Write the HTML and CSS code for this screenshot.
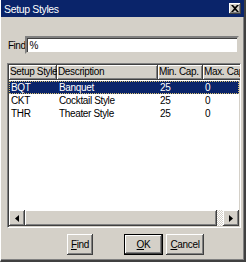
FILE: index.html
```html
<!DOCTYPE html>
<html>
<head>
<meta charset="utf-8">
<title>Setup Styles</title>
<link rel="stylesheet" href="styles.css">
</head>
<body>
<div class="window">
  <div class="titlebar">
    <span class="title">Setup Styles</span>
    <span class="close">
      <svg width="8" height="7" viewBox="0 0 8 7"><path d="M0 0h2l2 2 2-2h2L5 3.5 8 7H6L4 5 2 7H0l3-3.5z" fill="#000"/></svg>
    </span>
  </div>
  <div class="content">
    <div class="find-row">
      <span class="find-label">Find</span>
      <div class="input">%</div>
    </div>
    <div class="list">
      <div class="header">
        <div class="hcell c1">Setup Style</div>
        <div class="hcell c2">Description</div>
        <div class="hcell c3">Min. Cap.</div>
        <div class="hcell c4">Max. Cap.</div>
      </div>
      <div class="row selected">
        <div class="cell c1">BQT</div>
        <div class="cell c2">Banquet</div>
        <div class="cell c3">25</div>
        <div class="cell c4">0</div>
      </div>
      <div class="row">
        <div class="cell c1">CKT</div>
        <div class="cell c2">Cocktail Style</div>
        <div class="cell c3">25</div>
        <div class="cell c4">0</div>
      </div>
      <div class="row">
        <div class="cell c1">THR</div>
        <div class="cell c2">Theater Style</div>
        <div class="cell c3">25</div>
        <div class="cell c4">0</div>
      </div>
      <div class="spacer"></div>
      <div class="hscroll">
        <div class="sbtn"><svg width="4" height="7" viewBox="0 0 4 7"><path d="M4 0v7L0 3.5z" fill="#000"/></svg></div>
        <div class="thumb"></div>
        <div class="track"></div>
        <div class="sbtn"><svg width="4" height="7" viewBox="0 0 4 7"><path d="M0 0v7l4-3.5z" fill="#000"/></svg></div>
      </div>
    </div>
    <div class="buttons">
      <div class="btn find"><span class="u">F</span>ind</div>
      <div class="btn default"><span class="inner"><span class="u">O</span>K</span></div>
      <div class="btn"><span class="u">C</span>ancel</div>
    </div>
  </div>
</div>
</body>
</html>
```
FILE: styles.css
```css
* { box-sizing: border-box; }
html, body { margin: 0; padding: 0; background: #d4d0c8; }
body {
  font-family: "Liberation Sans", Arial, sans-serif;
  font-size: 10px;
  letter-spacing: -0.35px;
  color: #000;
}
.window {
  width: 246px;
  height: 262px;
  display: flex;
  flex-direction: column;
  background: #d4d0c8;
  border-left: 1px solid #ffffff;
  border-right: 2px solid #404040;
  border-bottom: 2px solid #404040;
  box-shadow: inset -1px -1px 0 #808080;
}
.titlebar {
  height: 17px;
  background: #0a246a;
  color: #fff;
  display: flex;
  align-items: center;
  justify-content: space-between;
  padding: 0 3px 0 3px;
}
.title { font-size: 10.5px; }
.close {
  width: 12px;
  height: 11px;
  background: #d4d0c8;
  display: flex;
  align-items: center;
  justify-content: center;
  box-shadow: inset -1px -1px 0 #404040, inset 1px 1px 0 #fff, inset -2px -2px 0 #808080;
}
.content {
  flex: 1;
  display: flex;
  flex-direction: column;
  padding: 19px 3px 5px 6px;
}
.find-row {
  display: flex;
  align-items: center;
  padding-right: 2px;
}
.find-label {
  flex: none;
  padding-left: 1px;
  padding-right: 0;
  white-space: nowrap;
  letter-spacing: -0.5px;
}
.input {
  flex: 1;
  height: 18px;
  background: #fff;
  border: 2px solid;
  border-color: #808080 #d4d0c8 #d4d0c8 #808080;
  box-shadow: inset 1px 1px 0 #404040;
  padding: 1px 2px;
  line-height: 13px;
}
.list {
  margin-top: 9px;
  flex: 1;
  display: flex;
  flex-direction: column;
  background: #fff;
  border: 1px solid;
  border-color: #808080 #fff #fff #808080;
  box-shadow: inset 1px 1px 0 #404040, inset -1px -1px 0 #d4d0c8;
  padding: 1px;
  overflow: hidden;
}
.header, .row {
  display: flex;
  white-space: nowrap;
}
.header { height: 15px; flex: none; }
.hcell {
  background: #d4d0c8;
  height: 15px;
  line-height: 14px;
  padding-left: 1px;
  box-shadow: inset -1px -1px 0 #404040, inset 1px 1px 0 #fff, inset -2px -2px 0 #808080;
  overflow: hidden;
}
.c1 { width: 48px; flex: none; }
.c2 { width: 101px; flex: none; }
.c3 { width: 45px; flex: none; }
.c4 { width: 50px; flex: none; }
.row { height: 13px; line-height: 13px; }
.cell { padding-left: 2px; overflow: hidden; }
.row.selected {
  background: #0a246a;
  color: #fff;
  outline: 1px dotted #d8c070;
  outline-offset: -1px;
}
.header + .row { margin-top: 1px; }
.spacer { flex: 1; }
.hscroll {
  height: 16px;
  display: flex;
  flex: none;
  background: #d4d0c8;
}
.sbtn {
  width: 16px;
  height: 16px;
  display: flex;
  align-items: center;
  justify-content: center;
  background: #d4d0c8;
  box-shadow: inset -1px -1px 0 #404040, inset 1px 1px 0 #fff, inset -2px -2px 0 #808080;
}
.thumb {
  width: 192px;
  background: #d4d0c8;
  box-shadow: inset -1px -1px 0 #404040, inset 1px 1px 0 #fff, inset -2px -2px 0 #808080;
}
.track {
  flex: 1;
  background-color: #e9e7e3;
  background-image: repeating-conic-gradient(#ffffff 0 25%, #d4d0c8 0 50%);
  background-size: 2px 2px;
}
.buttons {
  margin-top: 6px;
  display: flex;
  gap: 3px;
  padding-left: 60px;
}
.btn {
  width: 38px;
  height: 21px;
  display: flex;
  align-items: center;
  justify-content: center;
  background: #d4d0c8;
  box-shadow: inset -1px -1px 0 #404040, inset 1px 1px 0 #fff, inset -2px -2px 0 #808080;
}
.btn.find { width: 26px; margin-right: 28px; }
.btn.default {
  width: 39px;
  border: 1px solid #000;
  box-shadow: none;
  padding: 0;
}
.btn.default .inner {
  width: 100%;
  height: 100%;
  display: flex;
  align-items: center;
  justify-content: center;
  box-shadow: inset -1px -1px 0 #404040, inset 1px 1px 0 #fff, inset -2px -2px 0 #808080;
}
.u { text-decoration: underline; }
```
